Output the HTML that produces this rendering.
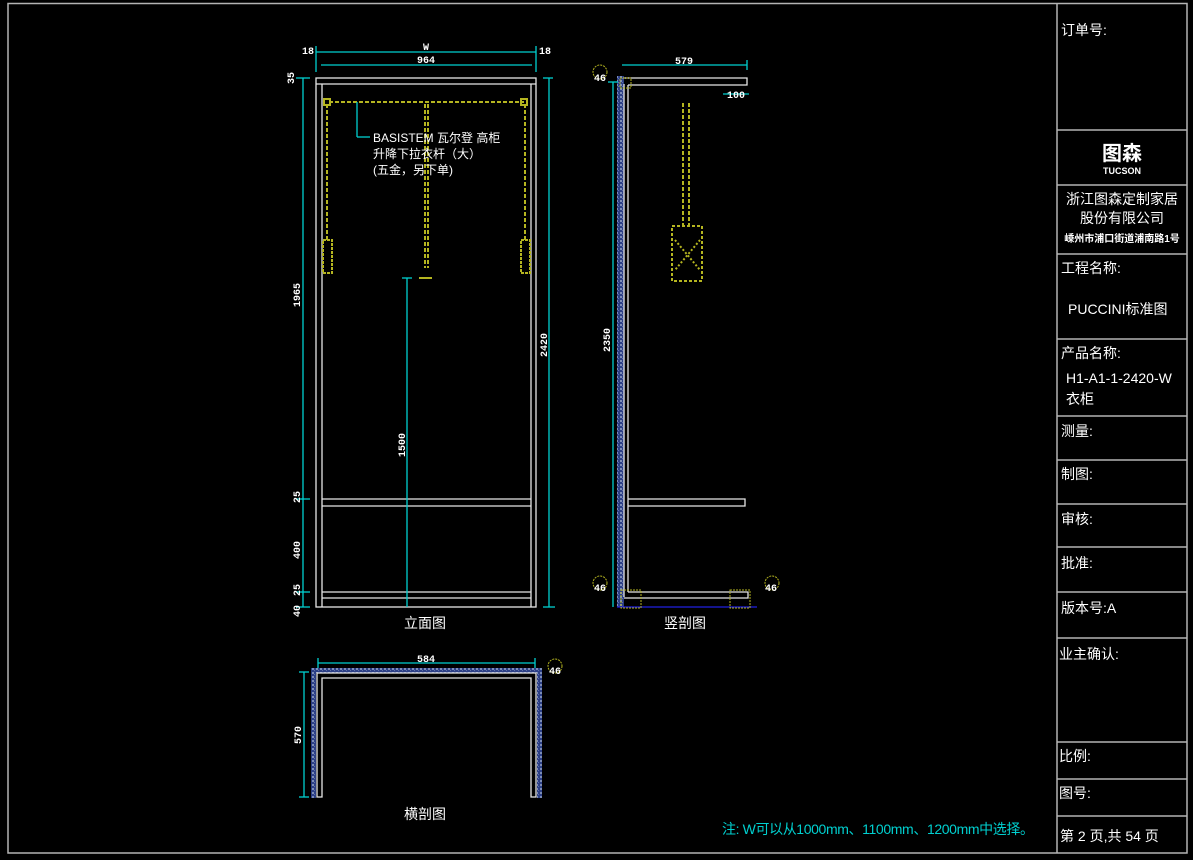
<!DOCTYPE html>
<html><head><meta charset="utf-8"><style>
html,body{margin:0;padding:0;background:#000;width:1193px;height:860px;overflow:hidden}
svg{display:block}
text{font-family:"Liberation Sans","Noto Sans CJK SC",sans-serif}
.t{fill:#fff;font-size:14px}
.d{fill:#fff;font-size:10px;font-family:"Liberation Mono",monospace;font-weight:bold}
</style></head><body>
<svg width="1193" height="860" viewBox="0 0 1193 860" xmlns="http://www.w3.org/2000/svg">
<defs>
<pattern id="h" width="4" height="4" patternUnits="userSpaceOnUse">
<rect width="4" height="4" fill="#2c3f86"/>
<rect x="0" y="0" width="2" height="2" fill="#7d8db8"/>
<rect x="2" y="2" width="1" height="1" fill="#5f70a8"/>
</pattern>
</defs>
<rect x="8" y="3.5" width="1179" height="849.5" fill="none" stroke="#b4b4b4" stroke-width="1.5"/>
<g stroke="#b4b4b4" stroke-width="1.5" fill="none">
<line x1="1057" y1="3" x2="1057" y2="853"/>
<line x1="1057" y1="130" x2="1187" y2="130"/>
<line x1="1057" y1="185" x2="1187" y2="185"/>
<line x1="1057" y1="254" x2="1187" y2="254"/>
<line x1="1057" y1="339" x2="1187" y2="339"/>
<line x1="1057" y1="416" x2="1187" y2="416"/>
<line x1="1057" y1="460" x2="1187" y2="460"/>
<line x1="1057" y1="504" x2="1187" y2="504"/>
<line x1="1057" y1="547" x2="1187" y2="547"/>
<line x1="1057" y1="592" x2="1187" y2="592"/>
<line x1="1057" y1="638" x2="1187" y2="638"/>
<line x1="1057" y1="742" x2="1187" y2="742"/>
<line x1="1057" y1="779" x2="1187" y2="779"/>
<line x1="1057" y1="816" x2="1187" y2="816"/>
</g>
<text class="t" x="1061" y="35">订单号:</text>
<text x="1122" y="160" fill="#fff" font-size="20" font-weight="bold" text-anchor="middle">图森</text>
<text x="1122" y="174" fill="#fff" font-size="9" font-weight="bold" text-anchor="middle">TUCSON</text>
<text class="t" x="1122" y="204" text-anchor="middle">浙江图森定制家居</text>
<text class="t" x="1122" y="223" text-anchor="middle">股份有限公司</text>
<text x="1122" y="242" fill="#fff" font-size="10" font-weight="bold" text-anchor="middle">嵊州市浦口街道浦南路1号</text>
<text class="t" x="1061" y="273">工程名称:</text>
<text class="t" x="1068" y="314" font-size="13">PUCCINI标准图</text>
<text class="t" x="1061" y="358">产品名称:</text>
<text class="t" x="1066" y="383" font-size="12">H1-A1-1-2420-W</text>
<text class="t" x="1066" y="404">衣柜</text>
<text class="t" x="1061" y="436">测量:</text>
<text class="t" x="1061" y="479">制图:</text>
<text class="t" x="1061" y="524">审核:</text>
<text class="t" x="1061" y="568">批准:</text>
<text class="t" x="1061" y="613">版本号:A</text>
<text class="t" x="1059" y="659">业主确认:</text>
<text class="t" x="1059" y="761">比例:</text>
<text class="t" x="1059" y="798">图号:</text>
<text class="t" x="1060" y="841" font-size="13">第 2 页,共 54 页</text>

<g stroke="#e6e6e6" stroke-width="1.3" fill="none">
<rect x="316" y="78" width="220" height="529"/>
<line x1="322" y1="84" x2="322" y2="607"/>
<line x1="531" y1="84" x2="531" y2="607"/>
<line x1="316" y1="84" x2="536" y2="84"/>
<line x1="322" y1="499" x2="531" y2="499"/>
<line x1="322" y1="506" x2="531" y2="506"/>
<line x1="322" y1="592" x2="531" y2="592"/>
<line x1="322" y1="598" x2="531" y2="598"/>
</g>
<g stroke="#b5b520" stroke-width="2" fill="none" stroke-dasharray="4,2">
<line x1="329" y1="102" x2="524" y2="102"/>
<line x1="327" y1="104" x2="327" y2="240"/>
<line x1="525" y1="104" x2="525" y2="240"/>
<line x1="425" y1="104" x2="425" y2="268"/>
<line x1="428" y1="104" x2="428" y2="268"/>
</g>
<g stroke="#b5b520" stroke-width="2" fill="none">
<rect x="323" y="240" width="9" height="33" stroke-dasharray="3,1"/>
<rect x="521" y="240" width="9" height="33" stroke-dasharray="3,1"/>
<line x1="419" y1="278" x2="432" y2="278"/>
<rect x="324" y="99" width="6" height="6"/><rect x="521" y="99" width="6" height="6"/>
</g>
<g stroke="#00d0d0" stroke-width="1.3" fill="none">
<line x1="316" y1="52" x2="536" y2="52"/>
<line x1="321" y1="65" x2="532" y2="65"/>
<line x1="316" y1="46" x2="316" y2="72"/><line x1="536" y1="46" x2="536" y2="72"/>
<line x1="303" y1="78" x2="303" y2="607"/>
<line x1="296" y1="78" x2="310" y2="78"/><line x1="296" y1="607" x2="310" y2="607"/>
<line x1="296" y1="499" x2="310" y2="499"/><line x1="296" y1="592" x2="310" y2="592"/>
<line x1="549" y1="78" x2="549" y2="607"/>
<line x1="543" y1="607" x2="555" y2="607"/><line x1="543" y1="78" x2="553" y2="78"/>
<line x1="407" y1="278" x2="407" y2="607"/><line x1="402" y1="278" x2="412" y2="278"/>
<line x1="357" y1="102" x2="357" y2="137"/><line x1="357" y1="137" x2="370" y2="137"/>
</g>
<text class="d" x="426" y="50" text-anchor="middle">W</text>
<text class="d" x="426" y="63" text-anchor="middle">964</text>
<text class="d" x="308" y="54" text-anchor="middle">18</text>
<text class="d" x="545" y="54" text-anchor="middle">18</text>
<text class="d" transform="translate(294,78) rotate(-90)" text-anchor="middle">35</text>
<text class="d" transform="translate(300,295) rotate(-90)" text-anchor="middle">1965</text>
<text class="d" transform="translate(547,345) rotate(-90)" text-anchor="middle">2420</text>
<text class="d" transform="translate(405,445) rotate(-90)" text-anchor="middle">1500</text>
<text class="d" transform="translate(300,497) rotate(-90)" text-anchor="middle">25</text>
<text class="d" transform="translate(300,550) rotate(-90)" text-anchor="middle">400</text>
<text class="d" transform="translate(300,590) rotate(-90)" text-anchor="middle">25</text>
<text class="d" transform="translate(300,611) rotate(-90)" text-anchor="middle">40</text>
<text x="373" y="142" fill="#fff" font-size="12" font-family="Liberation Serif,Noto Serif CJK SC,serif">BASISTEM 瓦尔登 高柜</text>
<text x="373" y="158" fill="#fff" font-size="12" font-family="Liberation Serif,Noto Serif CJK SC,serif">升降下拉衣杆（大）</text>
<text x="373" y="174" fill="#fff" font-size="12" font-family="Liberation Serif,Noto Serif CJK SC,serif">(五金，另下单)</text>
<text class="t" x="425" y="628" text-anchor="middle" font-size="15">立面图</text>

<rect x="617" y="76" width="7" height="531" fill="url(#h)"/>
<g stroke="#e6e6e6" stroke-width="1.3" fill="none">
<line x1="624" y1="84" x2="624" y2="597"/>
<line x1="628" y1="85" x2="628" y2="592"/>
<path d="M623 78 H747 V85 H628"/>
<path d="M628 499 H745 V506 H628"/>
<path d="M628 592 H748 V598 H624"/>
</g>
<line x1="617" y1="607" x2="757" y2="607" stroke="#2020e0" stroke-width="1.3"/>
<g stroke="#00d0d0" stroke-width="1.3" fill="none">
<line x1="622" y1="65" x2="747" y2="65"/><line x1="747" y1="60" x2="747" y2="70"/>
<line x1="613" y1="82" x2="613" y2="607"/><line x1="608" y1="82" x2="618" y2="82"/>
<line x1="723" y1="94" x2="749" y2="94"/>
</g>
<text class="d" x="684" y="64" text-anchor="middle">579</text>
<text class="d" x="736" y="98" text-anchor="middle">100</text>
<text class="d" transform="translate(610,340) rotate(-90)" text-anchor="middle">2350</text>
<g stroke="#b5b520" stroke-width="2" fill="none">
<line x1="683" y1="103" x2="683" y2="225" stroke-dasharray="4,2"/>
<line x1="689" y1="103" x2="689" y2="225" stroke-dasharray="4,2"/>
<rect x="672" y="226" width="30" height="55" stroke-dasharray="3,2"/>
<line x1="675" y1="240" x2="700" y2="270" stroke-dasharray="2,2"/>
<line x1="700" y1="240" x2="675" y2="270" stroke-dasharray="2,2"/>
<rect x="620" y="78" width="11" height="10" stroke-width="1" stroke-dasharray="2,1"/>
<rect x="621" y="590" width="20" height="18" stroke-width="1" stroke-dasharray="2,1"/>
<rect x="730" y="590" width="20" height="18" stroke-width="1" stroke-dasharray="2,1"/>
<circle cx="600" cy="72" r="7" stroke-width="1" stroke-dasharray="2,1"/>
<circle cx="600" cy="583" r="7" stroke-width="1" stroke-dasharray="2,1"/>
<circle cx="772" cy="583" r="7" stroke-width="1" stroke-dasharray="2,1"/>
</g>
<text class="d" x="600" y="81" text-anchor="middle">46</text>
<text class="d" x="600" y="591" text-anchor="middle">46</text>
<text class="d" x="771" y="591" text-anchor="middle">46</text>
<text class="t" x="685" y="628" text-anchor="middle" font-size="15">竖剖图</text>

<rect x="311" y="668" width="231" height="5" fill="url(#h)"/>
<rect x="311" y="668" width="5" height="130" fill="url(#h)"/>
<rect x="537" y="668" width="5" height="130" fill="url(#h)"/>
<g stroke="#e6e6e6" stroke-width="1.3" fill="none">
<path d="M317 797 V673 H536 V797 H531 V678 H322 V797 Z"/>
</g>
<g stroke="#00d0d0" stroke-width="1.3" fill="none">
<line x1="318" y1="663" x2="535" y2="663"/>
<line x1="318" y1="658" x2="318" y2="668"/><line x1="535" y1="658" x2="535" y2="668"/>
<line x1="304" y1="672" x2="304" y2="797"/>
<line x1="299" y1="672" x2="309" y2="672"/><line x1="299" y1="797" x2="309" y2="797"/>
</g>
<circle cx="555" cy="666" r="7" stroke="#b5b520" fill="none" stroke-dasharray="2,1"/>
<text class="d" x="555" y="674" text-anchor="middle">46</text>
<text class="d" x="426" y="662" text-anchor="middle">584</text>
<text class="d" transform="translate(301,735) rotate(-90)" text-anchor="middle">570</text>
<text class="t" x="425" y="819" text-anchor="middle" font-size="15">横剖图</text>

<text x="722" y="834" fill="#00d0d0" font-size="14" textLength="312">注: W可以从1000mm、1100mm、1200mm中选择。</text>
</svg>
</body></html>
